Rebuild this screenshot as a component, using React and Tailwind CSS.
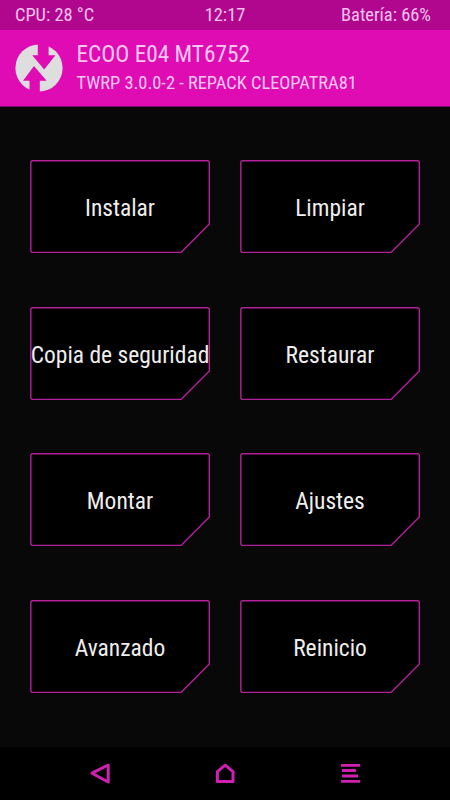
import React from 'react';

const actions = [
  { id: 'install', label: 'Instalar' },
  { id: 'wipe', label: 'Limpiar' },
  { id: 'backup', label: 'Copia de seguridad' },
  { id: 'restore', label: 'Restaurar' },
  { id: 'mount', label: 'Montar' },
  { id: 'settings', label: 'Ajustes' },
  { id: 'advanced', label: 'Avanzado' },
  { id: 'reboot', label: 'Reinicio' },
];

const Logo = () => (
  <svg className="w-12 h-12 shrink-0" viewBox="0 0 48 48">
    <circle cx="24" cy="24" r="23.6" fill="#dedede" />
    {/* Down arrow, then up arrow */}
    <path d="M22.8 -1 V11.3 H17.2 L29.2 25.5 L40.4 11.3 H33.6 V-1 Z" fill="#df0bb3" />
    <path d="M14.5 49 V36.7 H8 L19 22 L31.6 36.7 H24.8 V49 Z" fill="#df0bb3" />
  </svg>
);

const ActionButton = ({ label }) => (
  <button type="button" className="relative h-[93px] w-[180px] flex items-center justify-center">
    <svg className="absolute inset-0 w-full h-full" viewBox="0 0 180 93">
      <path
        d="M2 0.8 H178 L179.3 2 V64 L151 92.4 H2 L0.8 91 V2 Z"
        fill="#000000"
        stroke="#b2209a"
        strokeWidth="1.4"
        strokeLinejoin="round"
      />
    </svg>
    <span className="relative top-[1.4px] whitespace-nowrap text-[23.5px] leading-7 text-[#eeeeee]">{label}</span>
  </button>
);

const App = () => {
  return (
    <div className="w-[450px] h-[800px] flex flex-col overflow-hidden bg-[#080808] font-['Roboto_Condensed','Roboto',sans-serif] [font-stretch:75%]">
      {/* Status bar */}
      <div className="h-[30px] shrink-0 grid grid-cols-3 items-center px-[15px] pr-[19px] bg-[#b1078f] text-[18.4px] leading-[30px] text-[#f5c3eb]">
        <span>CPU: 28 °C</span>
        <span className="text-center pl-[4px]">12:17</span>
        <span className="text-right whitespace-nowrap">Batería: 66%</span>
      </div>

      {/* Header */}
      <header className="h-[77px] shrink-0 flex items-center pl-[14.5px] bg-[#df0bb3] border-b border-[#7d0866] text-[#f9c8ef]">
        <Logo />
        <div className="ml-[14px]">
          <h1 className="text-[23.3px] leading-[30px] whitespace-nowrap">ECOO E04 MT6752</h1>
          <p className="text-[18.4px] leading-[28px] whitespace-nowrap">TWRP 3.0.0-2 - REPACK CLEOPATRA81</p>
        </div>
      </header>

      {/* Main menu */}
      <main className="flex-1 grid grid-cols-2 content-start gap-x-[30px] gap-y-[53.7px] px-[30px] pt-[53px]">
        {actions.map((action) => (
          <ActionButton key={action.id} label={action.label} />
        ))}
      </main>

      {/* Navigation */}
      <nav className="h-[53px] shrink-0 flex items-center justify-between px-[88px] pb-px bg-black text-[#cf20b2]">
        <button type="button" aria-label="Back">
          <svg className="w-6 h-6" viewBox="0 0 24 24" fill="none" stroke="currentColor" strokeWidth="3" strokeLinejoin="round">
            <path d="M4 12.2 L20.2 4 V21 Z" />
          </svg>
        </button>
        <button type="button" aria-label="Home">
          <svg className="w-6 h-6" viewBox="0 0 24 24" fill="none" stroke="currentColor" strokeWidth="3" strokeLinejoin="round">
            <path d="M4.4 10.7 L12.2 4.2 L20 10.7 V20.6 H4.4 Z" />
          </svg>
        </button>
        <button type="button" aria-label="Menu">
          <svg className="w-6 h-6" viewBox="0 0 24 24" fill="none" stroke="currentColor" strokeWidth="2.8">
            <path d="M3 4.3 H22 M4 9.5 H18 M4 15 H20 M3 20.3 H22" />
          </svg>
        </button>
      </nav>
    </div>
  );
};

export default App;
